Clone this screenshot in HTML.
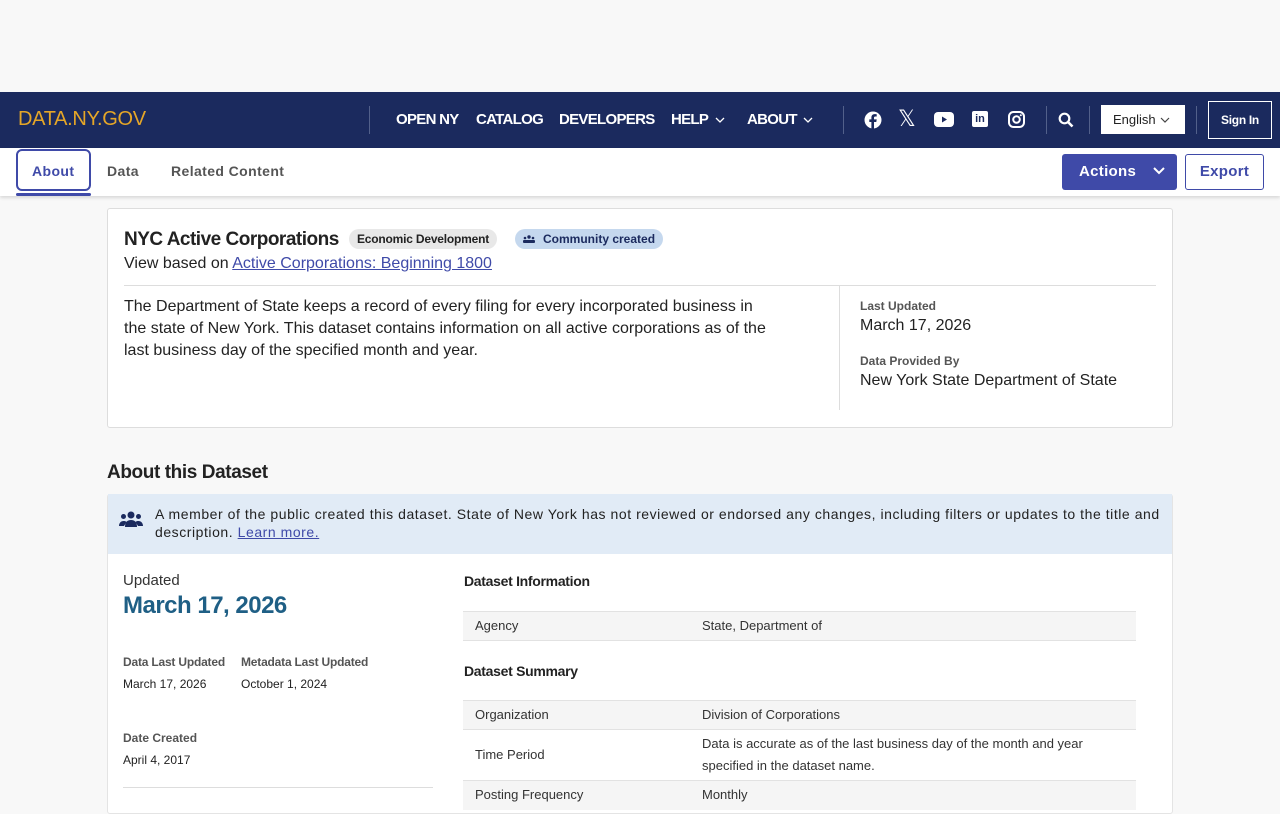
<!DOCTYPE html>
<html><head><meta charset="utf-8"><style>
*{box-sizing:border-box;margin:0;padding:0}
body{width:1280px;height:800px;overflow:hidden;background:#f8f8f8;font-family:"Liberation Sans",sans-serif;color:#222;position:relative}
.abs{position:absolute}
.nav{top:92px;left:0;width:1280px;height:56px;background:#1b2a5e}
.logo{left:18px;top:108px;color:#e5a628;font-size:20px;letter-spacing:-0.3px}
.vl{width:1px;background:#52608a;height:28px;top:106px}
.nl{color:#fff;font-weight:bold;font-size:15px;top:111px;letter-spacing:-0.7px;white-space:nowrap}
.tabs{top:148px;left:0;width:1280px;height:48px;background:#fff;box-shadow:0 2px 3px rgba(0,0,0,.12)}
.tab{top:163px;font-size:14px;color:#555;font-weight:bold;letter-spacing:0.4px}
.card{background:#fff;border:1px solid #ddd;border-radius:3px}
.lbl{font-size:12px;font-weight:bold;color:#555}
.row{left:463px;width:673px;font-size:13px;color:#333}
</style></head><body>
<div class="abs nav"></div>
<div class="abs logo">DATA.NY.GOV</div>
<div class="abs vl" style="left:369px"></div>
<div class="abs nl" style="left:396px">OPEN NY</div>
<div class="abs nl" style="left:476px">CATALOG</div>
<div class="abs nl" style="left:559px">DEVELOPERS</div>
<div class="abs nl" style="left:671px">HELP</div>
<svg class="abs" style="left:715px;top:117px" width="10" height="6"><path d="M1 1l4 4 4-4" stroke="#fff" stroke-width="1.3" fill="none"/></svg>
<div class="abs nl" style="left:747px">ABOUT</div>
<svg class="abs" style="left:803px;top:117px" width="10" height="6"><path d="M1 1l4 4 4-4" stroke="#fff" stroke-width="1.3" fill="none"/></svg>
<div class="abs vl" style="left:843px"></div>
<svg class="abs" style="left:864px;top:111px" width="18" height="18" viewBox="0 0 18 18"><circle cx="9" cy="9" r="8.5" fill="#fff"/><path d="M10 18V11h2.3l.4-2.6H10V6.8c0-.7.3-1.3 1.4-1.3h1.3V3.3c-.6-.1-1.3-.2-2-.2-2 0-3.300 1.200-3.300 3.400v1.900H5.300V11h2.100v7z" fill="#1b2a5e"/></svg>
<div class="abs" style="left:898px;top:107px;color:#fff;font-size:22px;font-family:'DejaVu Sans'">𝕏</div>
<svg class="abs" style="left:934px;top:112px" width="20" height="15"><rect width="20" height="15" rx="4" fill="#fff"/><path d="M8 4.5v6l5-3z" fill="#1b2a5e"/></svg>
<div class="abs" style="left:972px;top:111px;width:16px;height:16px;background:#fff;border-radius:2px;color:#1b2a5e;font-size:11px;font-weight:bold;text-align:center;line-height:16px">in</div>
<svg class="abs" style="left:1008px;top:111px" width="17" height="17"><rect x="1" y="1" width="15" height="15" rx="4.5" fill="none" stroke="#fff" stroke-width="2"/><circle cx="8.5" cy="8.5" r="3.3" fill="none" stroke="#fff" stroke-width="2"/><circle cx="12.8" cy="4.3" r="1" fill="#fff"/></svg>
<div class="abs vl" style="left:1046px"></div>
<svg class="abs" style="left:1058px;top:112px" width="16" height="16"><circle cx="6.5" cy="6.5" r="4.8" fill="none" stroke="#fff" stroke-width="2.2"/><path d="M10 10l4.5 4.5" stroke="#fff" stroke-width="2.6"/></svg>
<div class="abs vl" style="left:1089px"></div>
<div class="abs" style="left:1101px;top:105px;width:84px;height:29px;background:#fff;font-size:13px;padding:7px 0 0 12px;color:#222">English</div>
<svg class="abs" style="left:1160px;top:117px" width="10" height="6"><path d="M1 1l4 4 4-4" stroke="#444" stroke-width="1.2" fill="none"/></svg>
<div class="abs vl" style="left:1196px"></div>
<div class="abs" style="left:1208px;top:101px;width:64px;height:38px;border:1px solid #fff;color:#fff;font-size:12px;font-weight:bold;text-align:center;line-height:36px;letter-spacing:-0.3px">Sign In</div>

<div class="abs tabs"></div>
<div class="abs" style="left:16px;top:149px;width:75px;height:42px;border:2px solid #3f4aa8;border-radius:6px"></div>
<div class="abs" style="left:16px;top:193px;width:75px;height:3px;background:#3f4aa8;border-radius:2px"></div>
<div class="abs tab" style="left:32px;color:#3f4aa8">About</div>
<div class="abs tab" style="left:107px">Data</div>
<div class="abs tab" style="left:171px">Related Content</div>
<div class="abs" style="left:1062px;top:154px;width:115px;height:36px;background:#3f4aa8;border-radius:3px;color:#fff;font-weight:bold;font-size:15px;padding:9px 0 0 17px;letter-spacing:.3px">Actions <svg style="margin-left:12px;vertical-align:1px" width="12" height="8"><path d="M1 1l5 5 5-5" stroke="#fff" stroke-width="2" fill="none"/></svg></div>
<div class="abs" style="left:1185px;top:154px;width:79px;height:36px;border:1px solid #3f4aa8;border-radius:3px;background:#fff;color:#3f4aa8;font-weight:bold;font-size:15px;text-align:center;line-height:34px;letter-spacing:.3px">Export</div>

<div class="abs card" style="left:107px;top:208px;width:1066px;height:220px"></div>
<div class="abs" style="left:124px;top:229px;font-size:19px;font-weight:bold;letter-spacing:-0.5px">NYC Active Corporations</div>
<div class="abs" style="left:349px;top:229px;height:20px;padding:0 8px;background:#e8e8e8;border-radius:10px;font-size:12px;font-weight:bold;line-height:20px;letter-spacing:-0.2px">Economic Development</div>
<div class="abs" style="left:515px;top:229px;height:20px;padding:0 8px 0 28px;background:#c5d8ee;border-radius:10px;font-size:12px;font-weight:bold;line-height:20px;color:#1b2a5e">Community created</div>
<svg class="abs" style="left:523px;top:234px" width="12" height="9"><circle cx="6" cy="3" r="1.7" fill="#1b2a5e"/><circle cx="2" cy="4" r="1.3" fill="#1b2a5e"/><circle cx="10" cy="4" r="1.3" fill="#1b2a5e"/><rect x="0" y="6" width="12" height="3" rx="1" fill="#1b2a5e"/></svg>
<div class="abs" style="left:124px;top:255px;font-size:16px">View based on <span style="color:#3f4aa8;text-decoration:underline">Active Corporations: Beginning 1800</span></div>
<div class="abs" style="left:124px;top:285px;width:1032px;height:1px;background:#ddd"></div>
<div class="abs" style="left:124px;top:296px;width:655px;font-size:16px;line-height:22px">The Department of State keeps a record of every filing for every incorporated business in the state of New York. This dataset contains information on all active corporations as of the last business day of the specified month and year.</div>
<div class="abs" style="left:839px;top:286px;width:1px;height:124px;background:#ddd"></div>
<div class="abs lbl" style="left:860px;top:299px">Last Updated</div>
<div class="abs" style="left:860px;top:317px;font-size:16px">March 17, 2026</div>
<div class="abs lbl" style="left:860px;top:354px">Data Provided By</div>
<div class="abs" style="left:860px;top:372px;font-size:16px">New York State Department of State</div>

<div class="abs" style="left:107px;top:462px;font-size:19px;font-weight:bold;letter-spacing:-0.4px">About this Dataset</div>
<div class="abs card" style="left:107px;top:494px;width:1066px;height:320px;border-color:#e4e4e4"></div>
<div class="abs" style="left:108px;top:494px;width:1064px;height:60px;background:#e1ebf6"></div>
<svg class="abs" style="left:119px;top:511px" width="24" height="16"><circle cx="12" cy="4" r="3.5" fill="#1b2a5e"/><circle cx="4.5" cy="5.5" r="2.5" fill="#1b2a5e"/><circle cx="19.5" cy="5.5" r="2.5" fill="#1b2a5e"/><path d="M6 16c0-5 2.5-7 6-7s6 2 6 7z" fill="#1b2a5e"/><path d="M0 15c0-3 2-5 4.5-5s3 1 3 1L5 15z M24 15c0-3-2-5-4.5-5s-3 1-3 1L19 15z" fill="#1b2a5e"/></svg>
<div class="abs" style="left:155px;top:505px;width:1005px;font-size:14px;line-height:18px;letter-spacing:.55px">A member of the public created this dataset. State of New York has not reviewed or endorsed any changes, including filters or updates to the title and description. <span style="color:#3f4aa8;text-decoration:underline">Learn more.</span></div>

<div class="abs" style="left:123px;top:572px;font-size:15px;color:#333">Updated</div>
<div class="abs" style="left:123px;top:592px;font-size:24px;font-weight:bold;color:#1f5f85;letter-spacing:-0.5px">March 17, 2026</div>
<div class="abs lbl" style="left:123px;top:655px;letter-spacing:-0.2px">Data Last Updated</div>
<div class="abs" style="left:123px;top:677px;font-size:12px">March 17, 2026</div>
<div class="abs lbl" style="left:241px;top:655px;letter-spacing:-0.2px">Metadata Last Updated</div>
<div class="abs" style="left:241px;top:677px;font-size:12px">October 1, 2024</div>
<div class="abs lbl" style="left:123px;top:731px">Date Created</div>
<div class="abs" style="left:123px;top:753px;font-size:12px">April 4, 2017</div>
<div class="abs" style="left:123px;top:787px;width:310px;height:1px;background:#ddd"></div>

<div class="abs" style="left:464px;top:573px;font-size:14px;font-weight:bold;letter-spacing:-0.3px">Dataset Information</div>
<div class="abs row" style="top:611px;height:30px;background:#f5f5f5;border-top:1px solid #e2e2e2;border-bottom:1px solid #e2e2e2"></div>
<div class="abs" style="left:475px;top:618px;font-size:13px;color:#333">Agency</div>
<div class="abs" style="left:702px;top:618px;font-size:13px;color:#333">State, Department of</div>
<div class="abs" style="left:464px;top:663px;font-size:14px;font-weight:bold;letter-spacing:-0.3px">Dataset Summary</div>
<div class="abs row" style="top:700px;height:30px;background:#f5f5f5;border-top:1px solid #e2e2e2;border-bottom:1px solid #e2e2e2"></div>
<div class="abs" style="left:475px;top:707px;font-size:13px;color:#333">Organization</div>
<div class="abs" style="left:702px;top:707px;font-size:13px;color:#333">Division of Corporations</div>
<div class="abs" style="left:475px;top:747px;font-size:13px;color:#333">Time Period</div>
<div class="abs" style="left:702px;top:733px;width:420px;font-size:13px;line-height:22px;color:#333">Data is accurate as of the last business day of the month and year specified in the dataset name.</div>
<div class="abs row" style="top:780px;height:30px;background:#f5f5f5;border-top:1px solid #e2e2e2"></div>
<div class="abs" style="left:475px;top:787px;font-size:13px;color:#333">Posting Frequency</div>
<div class="abs" style="left:702px;top:787px;font-size:13px;color:#333">Monthly</div>
</body></html>
